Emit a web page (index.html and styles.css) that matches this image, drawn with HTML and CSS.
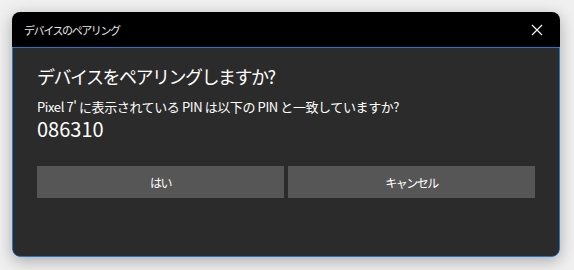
FILE: index.html
```html
<!DOCTYPE html>
<html lang="ja">
<head>
    <meta charset="UTF-8">
    <title>デバイスのペアリング</title>
    <link rel="stylesheet" href="styles.css">
</head>
<body>
    <div class="window">
        <div class="titlebar">
            <span class="title">デバイスのペアリング</span>
            <svg class="close" width="12" height="12" viewBox="0 0 12 12">
                <path d="M1 1 L11 11 M11 1 L1 11" stroke="#ffffff" stroke-width="1.1" fill="none"/>
            </svg>
        </div>
        <div class="content">
            <h1>デバイスをペアリングしますか?</h1>
            <p class="message">Pixel 7' に表示されている PIN は以下の PIN と一致していますか?</p>
            <div class="pin">086310</div>
            <div class="buttons">
                <button>はい</button>
                <button>キャンセル</button>
            </div>
        </div>
    </div>
</body>
</html>
```

FILE: styles.css
```css
body {
    margin: 0;
    padding: 12px 14px 13px 12px;
    background-color: #f0f0f0;
    font-family: 'Segoe UI', 'Noto Sans CJK JP', sans-serif;
    color: #ffffff;
}

.window {
    width: 548px;
    height: 245px;
    display: flex;
    flex-direction: column;
    border-radius: 8px;
    overflow: hidden;
    box-shadow: 0 4px 16px rgba(0, 0, 0, 0.3);
}

.titlebar {
    height: 35px;
    background-color: #000000;
    display: flex;
    align-items: center;
    justify-content: space-between;
    padding: 0 17px 0 12px;
    flex-shrink: 0;
}

.title {
    font-size: 11px;
    letter-spacing: -1.4px;
    color: #e8e8e8;
}

.content {
    flex: 1;
    background-color: #2b2b2b;
    border: 1px solid #1f78c8;
    border-bottom-left-radius: 8px;
    border-bottom-right-radius: 8px;
    padding: 14px 24px 0 24px;
}

h1 {
    margin: 0;
    font-size: 18px;
    letter-spacing: -1.5px;
    font-weight: normal;
    line-height: 28px;
}

.message {
    margin: 8px 0 0 0;
    font-size: 13px;
    letter-spacing: -0.4px;
    line-height: 18px;
}

.pin {
    margin-top: 0;
    font-size: 20px;
    line-height: 26px;
}

.buttons {
    display: flex;
    gap: 4px;
    margin-top: 24px;
}

button {
    flex: 1;
    height: 32px;
    background-color: #565656;
    color: #ffffff;
    border: none;
    font-family: inherit;
    font-size: 12px;
    letter-spacing: -1.5px;
}
```
